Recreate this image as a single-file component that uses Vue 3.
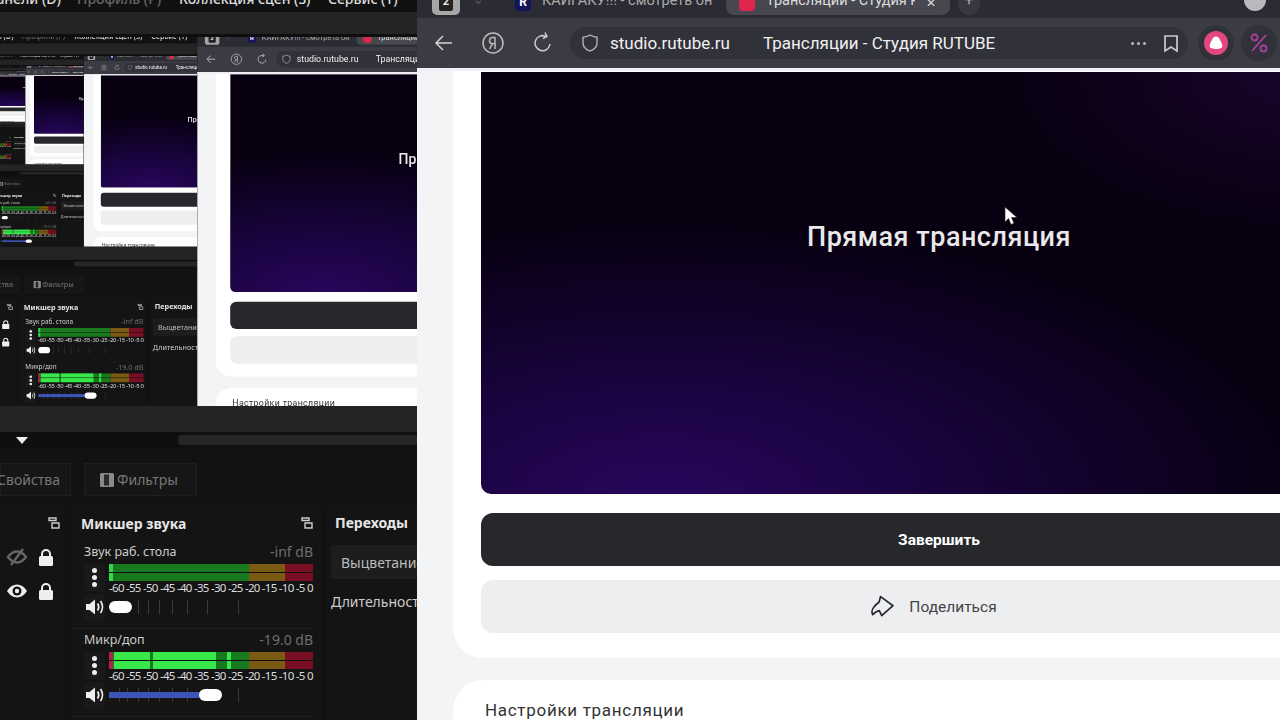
<template>
  <div class="screen">
    <!-- OBS -->
    <div class="obs">
      <div class="menu">
        <span class="m1">Панели (D)</span>
        <span class="m2">Профиль (P)</span>
        <span class="m3">Коллекция сцен (S)</span>
        <span class="m4">Сервис (T)</span>
      </div>
      <div class="band top-band"></div>
      <div class="preview">
        <!-- the display capture shows this same screen again -->
        <div v-if="depth < 4" class="capture">
          <App :depth="depth + 1" />
        </div>
      </div>
      <div class="band low-band"></div>
      <div class="scroll-row">
        <span class="triangle"></span>
        <span class="scrollbar"></span>
      </div>
      <div class="tabs-row">
        <div class="obs-tab props">Свойства</div>
        <div class="obs-tab filters">
          <svg width="16" height="16" viewBox="0 0 16 16">
            <rect x="1" y="1" width="14" height="14" rx="1.5" fill="#8a8a8a" />
            <rect x="5" y="2.5" width="5" height="11" fill="#2a2a2a" />
          </svg>
          Фильтры
        </div>
      </div>
      <div class="docks">
        <div class="dock sources">
          <svg class="popout" width="12" height="12" viewBox="0 0 12 12">
            <path d="M1 1h7v2.5H1zM4 6h7v5H4z" fill="none" stroke="#ccc" stroke-width="1.4" />
          </svg>
          <div class="src-row">
            <svg width="22" height="18" viewBox="0 0 22 18" fill="none" stroke="#666" stroke-width="2.4">
              <path d="M2 9c3-4 6-5.500 9-5.500S17 5 20 9c-3 4-6 5.500-9 5.500S5 13 2 9z" />
              <path d="M17 1 5 17" />
            </svg>
            <svg width="16" height="19" viewBox="0 0 16 19">
              <path d="M4 9V6a4 4 0 0 1 8 0v3" fill="none" stroke="#eee" stroke-width="2" />
              <rect x="1" y="8" width="14" height="10" rx="1.500" fill="#eee" />
            </svg>
          </div>
          <div class="src-row">
            <svg width="22" height="18" viewBox="0 0 22 18">
              <path d="M1 9c3-4.500 6.500-6.500 10-6.500S18 4.500 21 9c-3 4.500-6.500 6.500-10 6.500S4 13.500 1 9z" fill="#eee" />
              <circle cx="11" cy="9" r="4.500" fill="#141414" />
              <circle cx="11" cy="9" r="2.200" fill="#eee" />
            </svg>
            <svg width="16" height="19" viewBox="0 0 16 19">
              <path d="M4 9V6a4 4 0 0 1 8 0v3" fill="none" stroke="#eee" stroke-width="2" />
              <rect x="1" y="8" width="14" height="10" rx="1.500" fill="#eee" />
            </svg>
          </div>
        </div>

        <div class="dock mixer">
          <div class="dock-head">
            <span>Микшер звука</span>
            <svg width="12" height="12" viewBox="0 0 12 12">
              <path d="M1 1h7v2.500H1zM4 6h7v5H4z" fill="none" stroke="#ccc" stroke-width="1.400" />
            </svg>
          </div>
          <div v-for="ch in channels" :key="ch.name" class="channel">
            <div class="ch-head">
              <span>{{ ch.name }}</span>
              <span class="db">{{ ch.db }}</span>
            </div>
            <div class="ch-body">
              <div class="ch-btn dots"><i></i><i></i><i></i></div>
              <div class="ch-meter">
                <div class="meter">
                  <b class="seg green"></b>
                  <b class="seg yellow"></b>
                  <b class="seg red"></b>
                  <b
                    v-for="(p, i) in ch.peaks"
                    :key="i"
                    class="peak"
                    :style="{ left: p.x + 'px', width: p.w + 'px', background: p.c }"
                  ></b>
                </div>
                <div class="scale"><span v-for="s in scale" :key="s">{{ s }}</span></div>
              </div>
            </div>
            <div class="ch-body slider-row">
              <div class="ch-btn">
                <svg width="18" height="16" viewBox="0 0 18 16">
                  <path d="M0 5h3.500L9 .5v15L3.500 11H0z" fill="#eee" />
                  <path d="M11.500 4.500c1.400 2 1.400 5 0 7M14.500 2c2.500 3.500 2.500 8.500 0 12" fill="none" stroke="#eee" stroke-width="1.800" />
                </svg>
              </div>
              <div class="slider">
                <i v-for="t in ticks" :key="t" class="tick" :style="{ left: t + 'px' }"></i>
                <span class="fill" :style="{ width: ch.fill + 'px' }"></span>
                <span class="knob" :style="{ left: ch.knob + 'px' }"></span>
              </div>
            </div>
          </div>
        </div>

        <div class="dock transitions">
          <div class="dock-head">Переходы</div>
          <div class="select">Выцветание</div>
          <div class="duration">Длительность</div>
        </div>
      </div>
    </div>

    <!-- Browser -->
    <div class="browser">
      <div class="tabstrip">
        <div class="tab-count"><span>2</span></div>
        <div class="tab-more">⌄</div>
        <div class="tab">
          <span class="fav fav-r">R</span>
          <span class="tab-title">КАЙГАКУ!!! - смотреть онлайн</span>
        </div>
        <div class="tab active">
          <span class="fav fav-t"></span>
          <span class="tab-title">Трансляции - Студия RUTUBE</span>
          <span class="tab-x">✕</span>
        </div>
        <div class="tab-new">+</div>
        <div class="avatar"></div>
      </div>
      <div class="toolbar">
        <svg width="24" height="24" viewBox="0 0 24 24" fill="none" stroke="#d4d4d4" stroke-width="1.500">
          <path d="M20 12H5M11 5l-7 7 7 7" />
        </svg>
        <svg class="tb-ya" width="24" height="24" viewBox="0 0 24 24" fill="none" stroke="#bbb" stroke-width="1.500">
          <circle cx="12" cy="12" r="10" />
          <path d="M14 18V6.500h-2.200c-2 0-3.300 1.300-3.300 3.200s1.300 3.100 3.300 3.100H14M11.500 12.800 8.500 18" />
        </svg>
        <svg class="tb-reload" width="24" height="24" viewBox="0 0 24 24" fill="none" stroke="#ccc" stroke-width="1.500">
          <path d="M19 13a7.500 7.500 0 1 1-4-7.500M14 1.500l2 4-4 2" />
        </svg>
        <div class="urlbar">
          <svg width="18" height="20" viewBox="0 0 18 20" fill="none" stroke="#aaa" stroke-width="1.500">
            <path d="M9 2c2 1.500 4.500 2 7 2.200V10c0 4-3 6.700-7 8-4-1.300-7-4-7-8V4.200C4.500 4 7 3.500 9 2z" />
          </svg>
          <span class="host">studio.rutube.ru</span>
          <span class="page-title">Трансляции - Студия RUTUBE</span>
          <span class="more"><i></i><i></i><i></i></span>
          <svg class="bookmark" width="16" height="19" viewBox="0 0 16 19" fill="none" stroke="#ccc" stroke-width="1.700">
            <path d="M2 2h12v15l-6-4-6 4z" />
          </svg>
        </div>
        <div class="ring alice">
          <svg width="24" height="24" viewBox="0 0 24 24">
            <circle cx="12" cy="12" r="12" fill="#e2487f" />
            <path d="M12 5.500c2 0 3.200 1.500 4.300 3.700 1 2 2 4 2 5.600 0 2.700-3 3.200-6.300 3.200s-6.300-.5-6.300-3.200c0-1.600 1-3.600 2-5.600 1.100-2.200 2.300-3.700 4.300-3.700z" fill="#fff" />
          </svg>
        </div>
        <div class="ring percent">
          <svg width="18" height="20" viewBox="0 0 18 20" fill="none" stroke="#a8419c" stroke-width="1.800">
            <circle cx="4.500" cy="4.500" r="3" />
            <circle cx="13.500" cy="15.500" r="3" />
            <path d="M16 2 2 18" />
          </svg>
        </div>
      </div>
      <div class="page">
        <div class="card first">
          <div class="video">Прямая трансляция</div>
          <div class="btn finish">Завершить</div>
          <div class="btn share">
            <svg width="24" height="24" viewBox="0 0 24 24" fill="none" stroke="#26282b" stroke-width="1.700" stroke-linejoin="round">
              <path d="M10.600 1.600 23 10.700 11.700 20.700 9.300 15.700C7 16 5 17.500 2.700 19.700 1.500 17.500 2 14 4 12 5.500 10 7 8.500 9 7.300z" />
            </svg>
            Поделиться
          </div>
        </div>
        <div class="card second">Настройки трансляции</div>
      </div>
    </div>

    <svg v-if="depth === 0" class="cursor" width="14" height="22" viewBox="0 0 14 22">
      <path d="M1 1v15l3.500-3.500 2.500 6 3-1.300-2.500-5.700H13z" fill="#fff" stroke="#222" stroke-width="0.600" />
    </svg>
  </div>
</template>

<script setup>
defineProps({
  depth: { type: Number, default: 0 }
})

const scale = ['-60', '-55', '-50', '-45', '-40', '-35', '-30', '-25', '-20', '-15', '-10', '-5', '0']
const ticks = [10, 18, 29, 39, 50, 63, 78, 98, 129]

const channels = [
  {
    name: 'Звук раб. стола',
    db: '-inf dB',
    fill: 0,
    knob: 0,
    peaks: [{ x: 0, w: 4, c: '#36d649' }]
  },
  {
    name: 'Микр/доп',
    db: '-19.0 dB',
    fill: 96,
    knob: 90,
    peaks: [
      { x: 0, w: 4, c: '#b3244a' },
      { x: 5, w: 36, c: '#38e84a' },
      { x: 44, w: 63, c: '#38e84a' },
      { x: 118, w: 4, c: '#38e84a' }
    ]
  }
]
</script>

<style scoped>
.screen {
  position: relative;
  width: 1280px;
  height: 720px;
  display: flex;
  overflow: hidden;
  background: #121212;
  font-family: "Noto Sans", sans-serif;
}

/* OBS side */
.obs {
  width: 417px;
  flex: none;
  display: flex;
  flex-direction: column;
  overflow: hidden;
  color: #ddd;
}
.menu {
  height: 12px;
  flex: none;
  overflow: hidden;
  background: #111;
  white-space: nowrap;
  font-size: 14px;
  font-weight: 500;
  line-height: 14px;
  display: flex;
  position: relative;
}
.menu span {
  margin-top: -8px;
  flex: none;
}
.m1 { margin-left: -14px; width: 91px; }
.m2 { width: 102px; color: #666; }
.m3 { width: 149px; }
.m4 { width: 80px; }
.band { flex: none; background: #242424; }
.top-band { height: 22px; }
.low-band { height: 26px; }
.preview {
  height: 372px;
  flex: none;
  overflow: hidden;
  background: #0e0e0e;
}
.capture {
  width: 1280px;
  height: 720px;
  transform: translate(-18px, 3px) scale(0.516);
  transform-origin: 0 0;
  filter: blur(0.7px);
}
.scroll-row {
  height: 16px;
  flex: none;
  display: flex;
  align-items: center;
  background: #0f0f0f;
}
.triangle {
  width: 0;
  height: 0;
  margin-left: 16px;
  border-left: 6px solid transparent;
  border-right: 6px solid transparent;
  border-top: 7px solid #eee;
}
.scrollbar {
  margin-left: 150px;
  flex: 1;
  height: 10px;
  border-radius: 4px 0 0 4px;
  background: #262626;
}
.tabs-row {
  height: 57px;
  flex: none;
  display: flex;
  gap: 13px;
  padding-top: 15px;
  box-sizing: border-box;
  align-items: flex-start;
}
.obs-tab {
  height: 33px;
  display: flex;
  align-items: center;
  box-sizing: border-box;
  background: #161616;
  border: 1px solid #1e1e1e;
  font-size: 14px;
  color: #777;
}
.props {
  width: 71px;
  justify-content: flex-end;
  padding-right: 10px;
  white-space: nowrap;
}
.filters {
  width: 113px;
  gap: 2px;
  padding-left: 14px;
}
.docks {
  flex: 1;
  display: flex;
  gap: 6px;
  min-height: 0;
}
.dock {
  flex: none;
  background: #141414;
  box-sizing: border-box;
}
.sources {
  position: relative;
  width: 66px;
  padding-top: 35px;
}
.popout {
  position: absolute;
  top: 12px;
  left: 48px;
}
.src-row {
  height: 34px;
  display: flex;
  align-items: center;
  gap: 10px;
  padding-left: 6px;
}
.mixer {
  width: 249px;
  padding: 0 8px 0 0;
}
.dock-head {
  display: flex;
  justify-content: space-between;
  align-items: center;
  height: 36px;
  padding-left: 9px;
  font-size: 14px;
  font-weight: 700;
  color: #e6e6e6;
}
.channel {
  padding: 1px 0 0 12px;
  height: 88px;
  box-sizing: border-box;
  border-bottom: 1px solid #1d1d1d;
}
.ch-head {
  display: flex;
  justify-content: space-between;
  height: 22px;
  padding-bottom: 3px;
  box-sizing: border-box;
  align-items: center;
  font-size: 12.5px;
  color: #ccc;
}
.db { color: #6e6e6e; font-size: 14px; }
.ch-body {
  display: flex;
  gap: 4px;
}
.ch-btn {
  width: 21px;
  height: 27px;
  flex: none;
  display: flex;
  flex-direction: column;
  align-items: center;
  justify-content: center;
  gap: 2px;
  background: #191919;
  border-radius: 2px;
}
.dots i {
  width: 5px;
  height: 5px;
  border-radius: 50%;
  background: #eee;
}
.ch-meter { flex: 1; min-width: 0; }
.meter {
  position: relative;
  height: 17px;
  display: flex;
}
.meter::after {
  content: "";
  position: absolute;
  left: 0;
  right: 0;
  top: 8px;
  height: 1px;
  background: #0c0c0c;
}
.seg { display: block; }
.green { flex: 139; background: #187a1e; }
.yellow { flex: 36; background: #7b5a12; }
.red { flex: 28; background: #7a0e25; }
.peak {
  position: absolute;
  top: 0;
  bottom: 0;
}
.scale {
  display: flex;
  justify-content: space-between;
  font-size: 11.500px;
  line-height: 13px;
  letter-spacing: -0.7px;
  color: #ddd;
}
.slider-row {
  margin-top: -4px;
  height: 34px;
  align-items: center;
}
.slider {
  position: relative;
  flex: 1;
  height: 14px;
}
.tick {
  position: absolute;
  top: 0;
  width: 1px;
  height: 14px;
  background: #3a3a3a;
}
.fill {
  position: absolute;
  top: 4px;
  left: 0;
  height: 6px;
  background: #3d55b8;
}
.knob {
  position: absolute;
  top: 1px;
  width: 23px;
  height: 12px;
  border-radius: 6px;
  background: #fff;
}
.transitions {
  width: 120px;
  padding-left: 4px;
}
.transitions .dock-head {
  padding-left: 4px;
  display: block;
  line-height: 36px;
}
.select {
  height: 34px;
  margin-top: 4px;
  display: flex;
  align-items: center;
  padding-left: 10px;
  background: #1d1d1d;
  font-size: 14px;
  color: #bbb;
  white-space: nowrap;
  overflow: hidden;
}
.duration {
  margin-top: 13px;
  font-size: 14px;
  color: #ccc;
  white-space: nowrap;
}

/* Browser side */
.browser {
  flex: 1;
  min-width: 0;
  display: flex;
  flex-direction: column;
  overflow: hidden;
  font-family: Roboto, sans-serif;
}
.tabstrip {
  height: 18px;
  flex: none;
  display: flex;
  align-items: flex-start;
  overflow: hidden;
  background: #2b2b33;
  font-size: 14.500px;
  color: #aaa;
}
.tab-count {
  width: 28px;
  height: 15px;
  margin-left: 15px;
  flex: none;
  display: flex;
  justify-content: center;
  align-items: flex-end;
  padding-bottom: 4px;
  box-sizing: border-box;
  background: #a6a6a6;
  border-radius: 0 0 5px 5px;
}
.tab-count span {
  width: 14px;
  height: 15px;
  background: #222;
  color: #eee;
  border-radius: 0 0 2px 2px;
  font-size: 11px;
  line-height: 12px;
  text-align: center;
  font-weight: 700;
}
.tab-more {
  width: 36px;
  flex: none;
  text-align: center;
  color: #555;
  line-height: 0;
}
.tab {
  width: 230px;
  height: 15px;
  padding-left: 19px;
  flex: none;
  display: flex;
  align-items: flex-end;
  box-sizing: border-box;
  gap: 11px;
  overflow: hidden;
  white-space: nowrap;
}
.tab.active {
  width: 224px;
  padding-left: 13px;
  background: #47474f;
  border-radius: 0 0 8px 8px;
  color: #ddd;
}
.fav {
  width: 16px;
  height: 16px;
  flex: none;
  margin-bottom: 4px;
  border-radius: 4px;
}
.fav-r {
  background: #14145a;
  color: #fff;
  font-size: 12px;
  font-weight: 700;
  line-height: 14px;
  text-align: center;
}
.fav-t { background: #e0264c; }
.tab-title {
  width: 170px;
  flex: none;
  overflow: hidden;
  line-height: 14px;
  margin-bottom: 7px;
}
.tab.active .tab-title { width: 149px; }
.tab-x {
  font-size: 12px;
  line-height: 12px;
  margin-bottom: 6px;
}
.tab-new {
  width: 22px;
  height: 15px;
  margin-left: 8px;
  flex: none;
  border-radius: 0 0 11px 11px;
  background: #383840;
  text-align: center;
  line-height: 0;
  font-size: 16px;
}
.avatar {
  width: 22px;
  height: 11px;
  margin-left: auto;
  margin-right: 14px;
  flex: none;
  border-radius: 0 0 11px 11px;
  background: #b9b9bd;
}
.toolbar {
  height: 50px;
  flex: none;
  display: flex;
  align-items: center;
  padding-left: 15px;
  background: #3b3b43;
  color: #f0f0f0;
}
.tb-ya { margin-left: 25px; }
.tb-reload { margin-left: 26px; }
.urlbar {
  width: 618px;
  height: 32px;
  margin-left: 15px;
  padding-left: 11px;
  flex: none;
  display: flex;
  align-items: center;
  box-sizing: border-box;
  border-radius: 16px;
  background: #31313a;
  font-size: 17px;
  white-space: nowrap;
}
.host { margin-left: 11px; width: 153px; flex: none; }
.page-title { width: 368px; flex: none; }
.more {
  width: 18px;
  flex: none;
  display: flex;
  gap: 3px;
}
.more i {
  width: 3px;
  height: 3px;
  border-radius: 50%;
  background: #bbb;
}
.bookmark { margin-left: 14px; }
.ring {
  width: 36px;
  height: 36px;
  flex: none;
  display: flex;
  align-items: center;
  justify-content: center;
  border-radius: 50%;
  background: #31313a;
}
.alice { margin-left: 10px; }
.percent { margin-left: 7px; }
.page {
  flex: 1;
  min-height: 0;
  overflow: hidden;
  background: #f3f4f6;
  border-top: 3px solid #f2eef8;
}
.card {
  width: 1000px;
  margin-left: 36px;
  padding-left: 28px;
  box-sizing: border-box;
  background: #fff;
}
.first {
  padding-top: 1px;
  padding-bottom: 25px;
  border-radius: 0 0 0 30px;
}
.second {
  margin-top: 22px;
  padding-top: 21px;
  padding-left: 32px;
  border-radius: 30px 0 0 0;
  font-size: 17px;
  letter-spacing: 0.7px;
  line-height: 18px;
  color: #333;
  height: 60px;
}
.video {
  width: 916px;
  height: 422px;
  box-sizing: border-box;
  padding-top: 147px;
  border-radius: 0 0 10px 10px;
  background:
    radial-gradient(ellipse 640px 270px at 20% 100%, #27065c 0, #170338 50%, rgba(10, 0, 20, 0) 100%),
    radial-gradient(ellipse 300px 160px at 90% 0, #1a042b 0, rgba(28, 4, 46, 0) 100%),
    #080011;
  color: #e9e9e9;
  font-size: 27px;
  letter-spacing: 0.5px;
  line-height: 36px;
  font-weight: 500;
  text-align: center;
}
.btn {
  width: 916px;
  height: 53px;
  display: flex;
  align-items: center;
  justify-content: center;
  border-radius: 12px;
}
.finish {
  margin-top: 19px;
  background: #26282b;
  color: #fff;
  font-size: 15.500px;
  font-weight: 700;
}
.share {
  margin-top: 14px;
  padding-right: 11px;
  box-sizing: border-box;
  gap: 15px;
  background: #eceef0;
  color: #444;
  font-size: 15.500px;
}
.cursor {
  position: absolute;
  left: 1004px;
  top: 206px;
}
</style>

<style>
body {
  background: #121212;
}
</style>
